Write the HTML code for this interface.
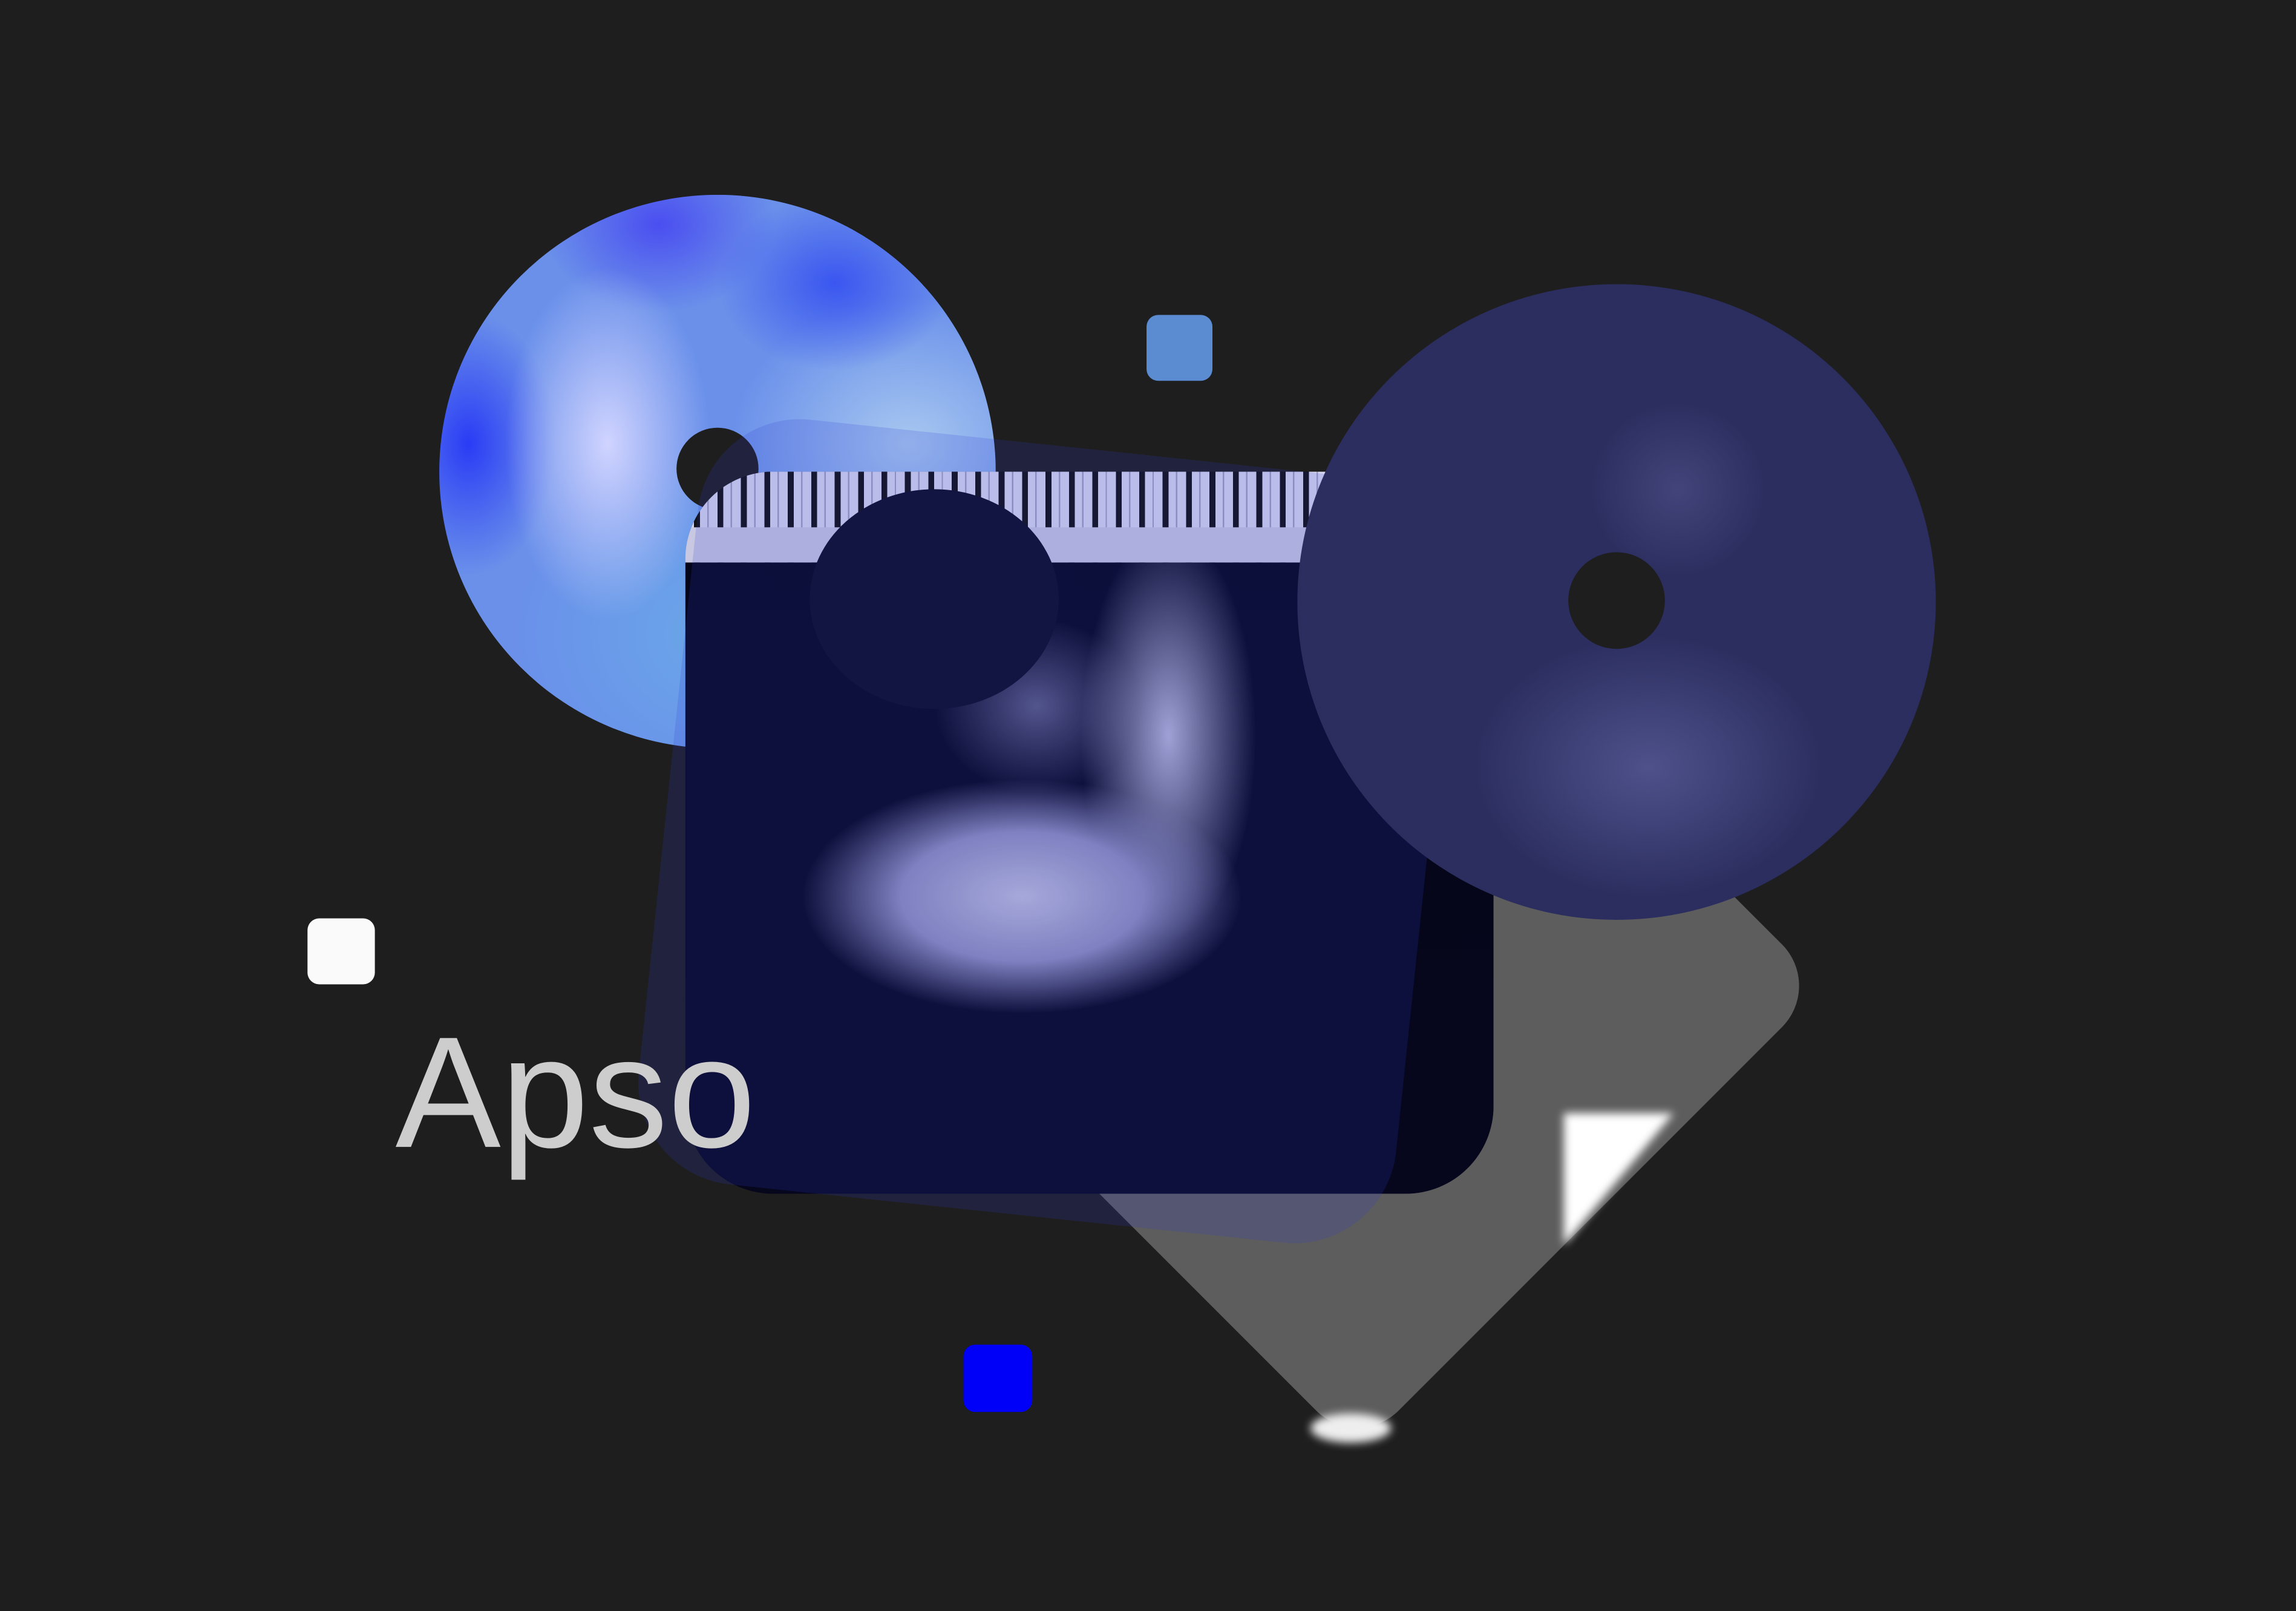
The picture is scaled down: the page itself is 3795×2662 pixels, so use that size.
<!DOCTYPE html>
<html><head><meta charset="utf-8"><style>
html,body{margin:0;padding:0;background:#1e1e1e;width:3795px;height:2661px;overflow:hidden}
#s{position:absolute;left:0;top:0;width:1568px;height:1100px;transform:scale(2.4203);transform-origin:0 0}
.a{position:absolute}
</style></head><body><div id="s">
<div class="a" style="left:702px;top:448px;width:450px;height:450px;background:#5d5d5d;border-radius:40px;transform:rotate(45deg)"></div>
<div class="a" style="left:1068px;top:760px;width:0;height:0;border-left:75px solid #fff;border-bottom:90px solid transparent;filter:blur(3px)"></div>
<div class="a" style="left:895px;top:965px;width:55px;height:20px;background:#eee;border-radius:50%;filter:blur(3px)"></div>
<div class="a" style="left:300px;top:133px;width:380px;height:378px;border-radius:50%;background:
radial-gradient(ellipse 70px 120px at 115px 170px,#d0d4ff,transparent),
radial-gradient(ellipse 80px 60px at 270px 60px,#3a56f0,transparent),
radial-gradient(ellipse 80px 60px at 150px 20px,#4a4ef0,transparent),
radial-gradient(ellipse 60px 90px at 20px 170px,#2a3cf5,transparent),
radial-gradient(ellipse 120px 100px at 320px 170px,#a8c8f0,transparent),
radial-gradient(ellipse 150px 120px at 200px 300px,#6aa8e8,transparent),#6a90ea"></div>
<div class="a" style="left:462px;top:292px;width:56px;height:56px;border-radius:50%;background:#1e1e1e"></div>
<div class="a" style="left:468px;top:322px;width:552px;height:493px;border-radius:60px;overflow:hidden;background:
radial-gradient(ellipse 150px 80px at 230px 290px,#c0c0dc 0%,#9090be 55%,transparent 100%),
radial-gradient(ellipse 60px 140px at 330px 180px,#b8b8d8 0%,transparent 100%),
radial-gradient(ellipse 70px 60px at 240px 160px,#5a5a7e,transparent),
linear-gradient(#05051a,#06061c)">
<div class="a" style="left:0;top:0;width:552px;height:62px;background:repeating-linear-gradient(90deg,#d8d8ee 0 6px,#111 6px 10px,#d8d8ee 10px 15px,#a0a0c0 15px 16px)"></div>
<div class="a" style="left:0;top:38px;width:552px;height:24px;background:#c8c8e2"></div>
<div class="a" style="left:85px;top:12px;width:170px;height:150px;border-radius:50%;background:#0c0c22"></div>
</div>
<div class="a" style="left:455px;top:305px;width:520px;height:525px;border-radius:70px;background:rgba(50,60,210,0.18);transform:rotate(6deg)"></div>
<div class="a" style="left:886px;top:194px;width:436px;height:434px;border-radius:50%;background:
radial-gradient(ellipse 120px 90px at 240px 330px,rgba(120,125,190,0.45),transparent),
radial-gradient(ellipse 60px 60px at 260px 140px,rgba(110,110,170,0.35),transparent),
radial-gradient(circle at 218px 217px,#2c2e60 40%,#2b2d5e 90%,#3a3c70 100%)"></div>
<div class="a" style="left:1071px;top:377px;width:66px;height:66px;border-radius:50%;background:#1e1e1e"></div>
<div class="a" style="left:783px;top:215px;width:45px;height:45px;border-radius:8px;background:#5b8cd2"></div>
<div class="a" style="left:210px;top:627px;width:46px;height:45px;border-radius:8px;background:#fafafa"></div>
<div class="a" style="left:658px;top:918px;width:47px;height:46px;border-radius:8px;background:#0000f8"></div>
<div class="a" style="left:270px;top:692px;font:108px 'Liberation Sans',sans-serif;color:#cdcdcd;line-height:1">Apso</div>
</div></body></html>
